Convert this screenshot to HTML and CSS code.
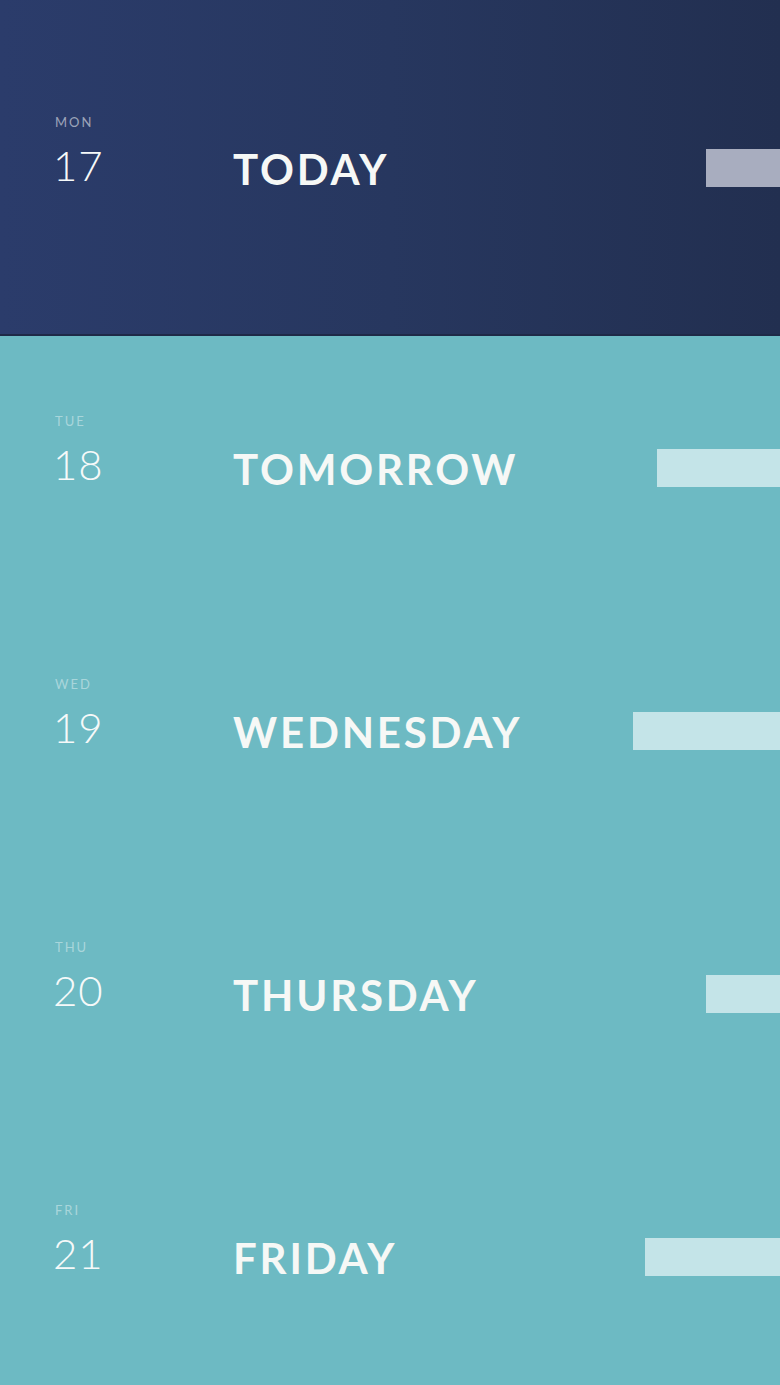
FILE: index.html
```html
<!DOCTYPE html>
<html>
<head>
<meta charset="utf-8">
<link rel="stylesheet" href="styles.css">
</head>
<body>
<div class="list">
  <div class="row today">
    <div class="date"><span class="dow">MON</span><span class="num">17</span></div>
    <div class="title">TODAY</div>
    <div class="bar" style="width:74px"></div>
  </div>
  <div class="row">
    <div class="date"><span class="dow">TUE</span><span class="num">18</span></div>
    <div class="title">TOMORROW</div>
    <div class="bar" style="width:123px"></div>
  </div>
  <div class="row">
    <div class="date"><span class="dow">WED</span><span class="num">19</span></div>
    <div class="title">WEDNESDAY</div>
    <div class="bar" style="width:147px"></div>
  </div>
  <div class="row">
    <div class="date"><span class="dow">THU</span><span class="num">20</span></div>
    <div class="title">THURSDAY</div>
    <div class="bar" style="width:74px"></div>
  </div>
  <div class="row">
    <div class="date"><span class="dow">FRI</span><span class="num">21</span></div>
    <div class="title">FRIDAY</div>
    <div class="bar" style="width:135px"></div>
  </div>
</div>
</body>
</html>
```

FILE: styles.css
```css
html, body {
  margin: 0;
  padding: 0;
}
body {
  width: 780px;
  height: 1385px;
  overflow: hidden;
  background: #6dbac3;
  font-family: Lato, "Liberation Sans", sans-serif;
  color: #f4f8f8;
}
.list {
  display: flex;
  flex-direction: column;
}
.row {
  display: flex;
  align-items: center;
  height: 263px;
  background: #6dbac3;
}
.row.today {
  height: 336px;
  background: linear-gradient(90deg, #2b3c6b 0%, #27375f 50%, #222f50 100%);
  box-shadow: inset 0 -2px 0 #1f2a47;
}
.date {
  width: 180px;
  padding-left: 53px;
  display: flex;
  flex-direction: column;
  align-items: flex-start;
  padding-bottom: 36px;
  box-sizing: content-box;
}
.dow {
  font-size: 13px;
  line-height: 14px;
  height: 14px;
  letter-spacing: 2px;
  color: rgba(255, 255, 255, 0.42);
  margin-bottom: 15px;
  padding-left: 2px;
}
.today .dow {
  color: rgba(255, 255, 255, 0.55);
}
.num {
  font-size: 42px;
  line-height: 42px;
  font-weight: 300;
  letter-spacing: 1px;
  color: #f6f9f9;
}
.title {
  font-size: 42px;
  line-height: 42px;
  font-weight: 700;
  letter-spacing: 2.8px;
  color: #f6f8f6;
  padding-top: 2px;
}
.bar {
  margin-left: auto;
  height: 38px;
  background: #c4e4e8;
}
.today .bar {
  background: #a8adbf;
}
```
